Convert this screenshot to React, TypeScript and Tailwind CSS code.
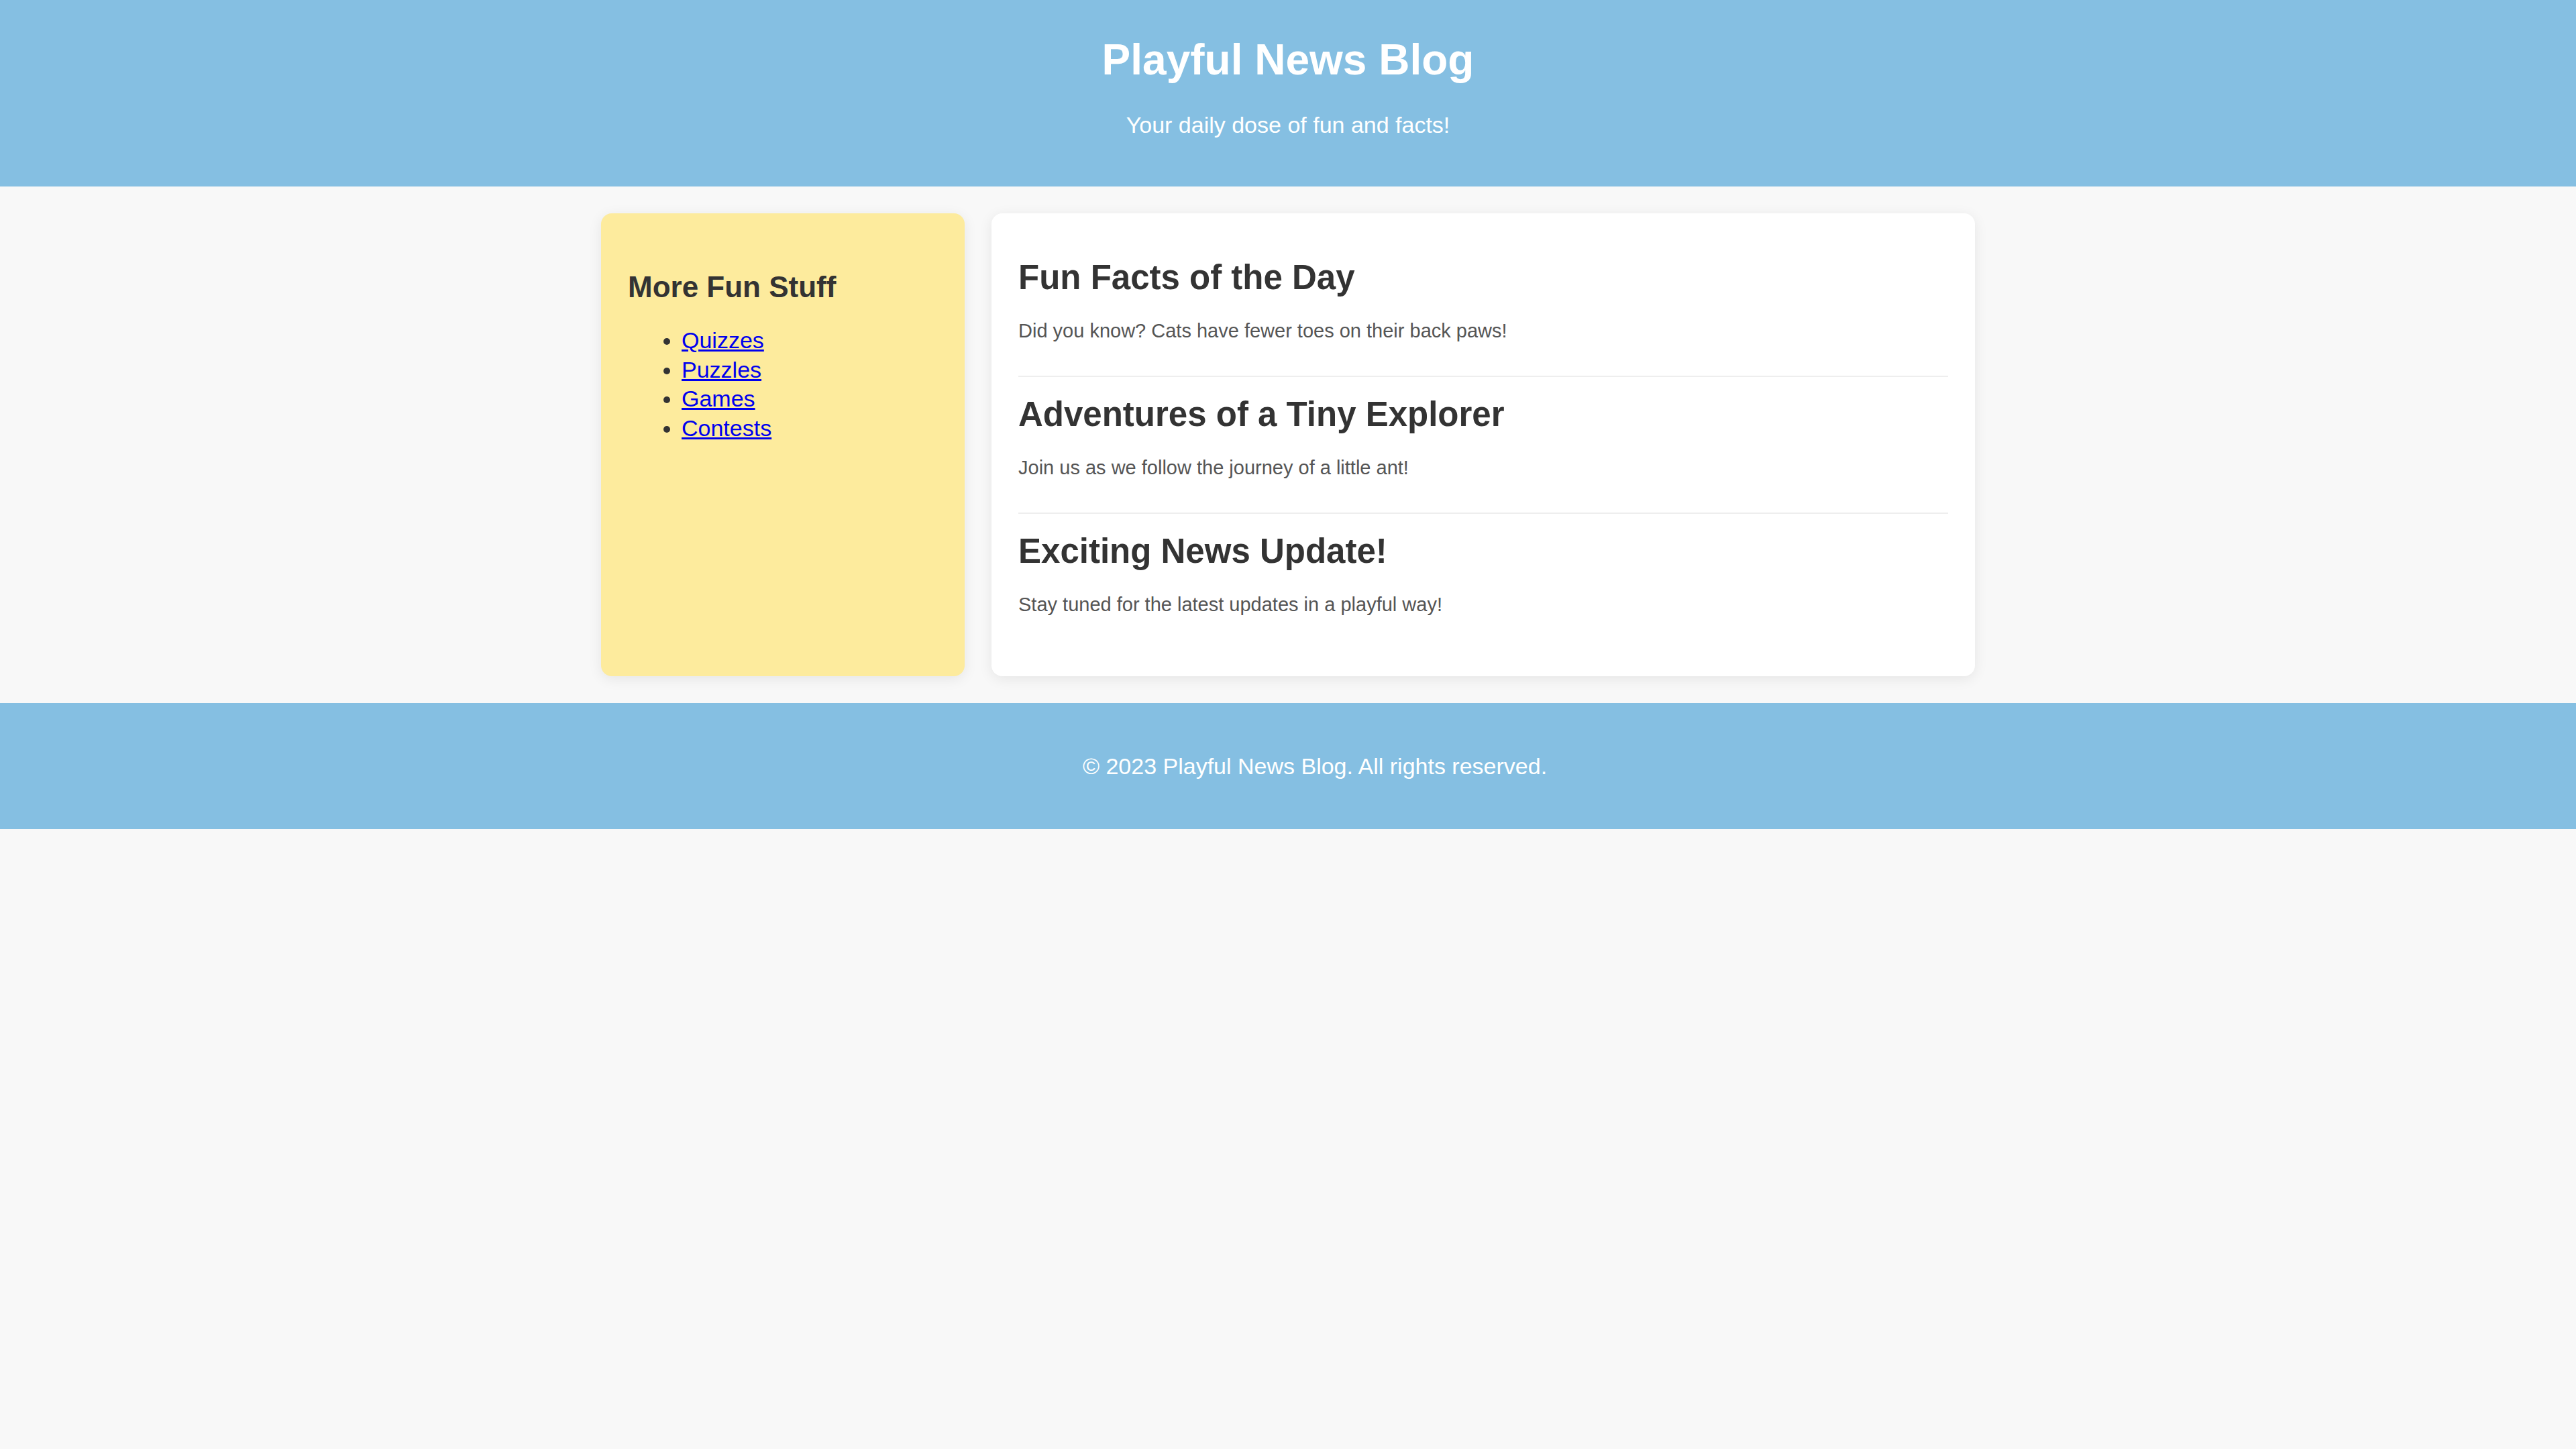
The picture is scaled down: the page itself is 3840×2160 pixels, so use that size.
import React from 'react';

const articles = [
  { title: 'Fun Facts of the Day', body: 'Did you know? Cats have fewer toes on their back paws!' },
  { title: 'Adventures of a Tiny Explorer', body: 'Join us as we follow the journey of a little ant!' },
  { title: 'Exciting News Update!', body: 'Stay tuned for the latest updates in a playful way!' },
];

const links = ['Quizzes', 'Puzzles', 'Games', 'Contests'];

const App: React.FC = () => {
  return (
    <div className="min-h-screen bg-[#f8f8f8] text-[#333] font-['Liberation_Sans',Arial,sans-serif]">
      <header className="bg-[#85bfe2] text-white text-center pt-[49px] pb-[72px]">
        <h1 className="text-[64px] leading-[80px] font-bold">Playful News Blog</h1>
        <p className="mt-[37px] text-[34px] leading-[40px]">Your daily dose of fun and facts!</p>
      </header>

      <div className="max-w-[2048px] mx-auto my-[40px] flex gap-[40px]">
        {/* Sidebar */}
        <aside className="flex-1 bg-[#fdeb9d] rounded-[16px] p-[40px] shadow-[0_4px_20px_rgba(0,0,0,0.08)]">
          <h2 className="mt-[43px] text-[44px] leading-[53px] font-bold">More Fun Stuff</h2>
          <ul className="mt-[32px] list-disc pl-[80px] text-[34px] leading-[43.5px]">
            {links.map(l => (
              <li key={l}>
                <a href="#" className="text-[#0000ee] underline">{l}</a>
              </li>
            ))}
          </ul>
        </aside>

        {/* Articles */}
        <main className="flex-[3] bg-white rounded-[16px] p-[40px] shadow-[0_4px_20px_rgba(0,0,0,0.08)]">
          {articles.map((a, i) => (
            <article
              key={a.title}
              className={`pb-[44px] ${i < articles.length - 1 ? 'border-b-2 border-[#eeeeee]' : ''}`}
            >
              <h2 className="mt-[24px] text-[51px] leading-[64px] font-bold">{a.title}</h2>
              <p className="mt-[25px] text-[29px] leading-[45px] text-[#555]">{a.body}</p>
            </article>
          ))}
        </main>
      </div>

      <footer className="bg-[#85bfe2] text-white h-[188px] pl-[80px] flex items-center justify-center">
        <p className="text-[34px]">© 2023 Playful News Blog. All rights reserved.</p>
      </footer>
    </div>
  );
};

export default App;
